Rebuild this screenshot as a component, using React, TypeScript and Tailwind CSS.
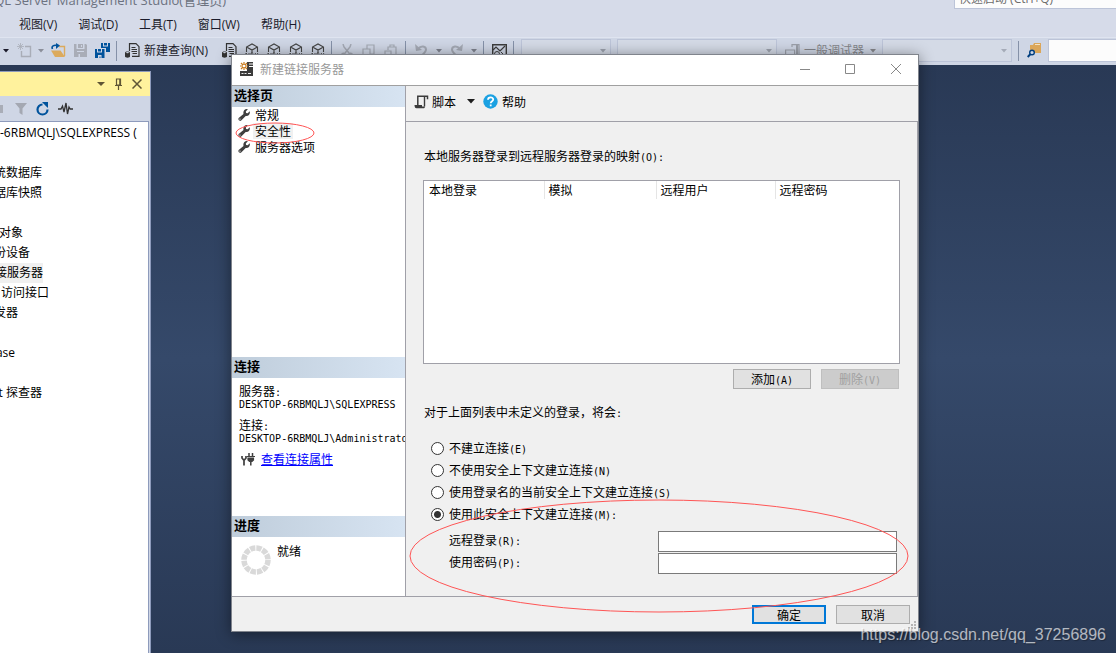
import { useState, type ReactNode } from 'react';

const UI_FONT = "font-['Open_Sans','Noto_Sans_CJK_SC',sans-serif]";
const DIALOG_FONT = "font-['Noto_Sans_CJK_SC',sans-serif]";

// Half-width latin runs inside dialog labels
function Mono({ children }: { children: ReactNode }) {
  return <span className="font-['DejaVu_Sans_Mono',monospace] text-[10px] leading-none">{children}</span>;
}

function Caret({ className = '' }: { className?: string }) {
  return (
    <svg width="6" height="4" viewBox="0 0 6 4" className={`shrink-0 ${className}`}>
      <path d="M0 0h6L3 3.5z" fill="currentColor" />
    </svg>
  );
}

function Separator({ className = '' }: { className?: string }) {
  return <span className={`h-5 w-px shrink-0 bg-[#8591a8] ${className}`} />;
}

function NewProjectIcon() {
  return (
    <svg width="15" height="15" viewBox="0 0 15 15" fill="none" stroke="#a9adb7">
      <path d="M3.5 0v7M0 3.5h7M1 1l5 5M6 1L1 6" strokeWidth=".8" />
      <path d="M8 3.5h5.5v10h-9V8" strokeWidth="1.4" />
    </svg>
  );
}

function OpenIcon() {
  return (
    <svg width="15" height="15" viewBox="0 0 15 15" fill="none">
      <path d="M8 3.5h5.5V13" stroke="#dcaa5c" strokeWidth="1.4" />
      <path d="M0 7.5h9.5L14 14H4z" fill="#dcaa5c" />
      <path d="M1.5 6C0 3 3 1.8 6 2.5" stroke="#00539c" strokeWidth="1.6" />
      <path d="M5 0l4 2.5L5 6z" fill="#00539c" />
    </svg>
  );
}

function SaveIcon() {
  return (
    <svg width="13" height="13" viewBox="0 0 13 13">
      <path d="M0 0h2.5v5h8V0H12l1 1v12H0z" fill="#a9adb7" />
      <path d="M4 0h5v4H4z" fill="#a9adb7" />
      <path d="M7 1h1v2H7zM4.500 10h1.500v3H4.500z" fill="#cfd6e5" />
      <path d="M3 7.500h7" stroke="#cfd6e5" />
    </svg>
  );
}

function SaveAllIcon() {
  return (
    <svg width="15" height="15" viewBox="0 0 15 15" fill="#00539c">
      <path d="M6 0h2v3.500h5V0h2v9h-4V5H6z" />
      <path d="M9 0h3v2.500H9z" />
      <path d="M0 6h2v3.500h5V6h2.500v9H0z" />
      <path d="M3 6h3v2.500H3z" />
      <path d="M3 12h3.500v3H5.500v-1.500H4.500V15H3z" fill="#cfd6e5" />
    </svg>
  );
}

function QueryIcon() {
  return (
    <svg width="15" height="15" viewBox="0 0 15 15" fill="none" stroke="#333">
      <path d="M4.500 8V.7H11l3 3v9.600H7" strokeWidth="1.200" />
      <path d="M6.500 4.500h4M6.500 6.500h5.500M6.500 8.500h5.500M7.500 10.500h4.500" />
      <path d="M0 9.500c0-1.500 5-1.500 5 0v4c0 1.500-5 1.500-5 0z" fill="#333" stroke="none" />
      <ellipse cx="2.500" cy="9.600" rx="1.500" ry=".6" fill="#cfd6e5" stroke="none" />
    </svg>
  );
}

function CubeIcon() {
  return (
    <svg width="14" height="15" viewBox="0 0 14 15" fill="none" stroke="#444">
      <path d="M1.500 9V4L7 1l5.500 3v5M1.500 4L7 7l5.500-3M7 7v3" strokeWidth="1.100" />
      <path d="M1 14V10l3 4v-4M6 10v4h1c2 0 2-4 0-4zM10 10l3 4M13 10l-3 4" strokeWidth=".9" />
    </svg>
  );
}

function CutIcon() {
  return (
    <svg width="12" height="14" viewBox="0 0 12 14" fill="none" stroke="#a4a9b4" strokeWidth="1.500">
      <path d="M2 0l1 3 5 6M10 0L9 3 4 9" />
      <circle cx="2.500" cy="11" r="1.800" />
      <circle cx="9.500" cy="11" r="1.800" />
    </svg>
  );
}

function CopyIcon() {
  return (
    <svg width="13" height="14" viewBox="0 0 13 14" fill="none" stroke="#a4a9b4" strokeWidth="1.200">
      <path d="M5 5V1h7v9H8M1 5h7v8H1z" />
    </svg>
  );
}

function PasteIcon() {
  return (
    <svg width="13" height="14" viewBox="0 0 13 14" fill="none" stroke="#a4a9b4" strokeWidth="1.200">
      <path d="M4 6V3h8v9H8M6 3V1h4v2M1 7h6v6H1z" />
    </svg>
  );
}

function UndoIcon({ flip = false }: { flip?: boolean }) {
  return (
    <svg width="13" height="13" viewBox="0 0 13 13" className={flip ? '-scale-x-100' : ''}>
      <path d="M3 5c3-4 8-3 8 .5 0 2.500-2 4-5 6.500" fill="none" stroke="#a4a9b4" strokeWidth="2" />
      <path d="M0 0l1 7 6-1z" fill="#a4a9b4" />
    </svg>
  );
}

function MonitorIcon() {
  return (
    <svg width="15" height="14" viewBox="0 0 15 14" fill="none" stroke="#3c3c3c">
      <path d="M.7.7h13.600v12.600H.7z" strokeWidth="1.400" />
      <path d="M1 6l3-3 4 4 5-5" strokeWidth="1.200" />
      <circle cx="5" cy="10" r="2.500" />
      <path d="M9 8l4 4" />
    </svg>
  );
}

function DebuggerIcon() {
  return (
    <svg width="15" height="14" viewBox="0 0 15 14" fill="none" stroke="#9b9fa9" strokeWidth="1.200">
      <path d="M.6 6h9v6h-9zM7 3V.6h7V12h-3" />
      <path d="M12 1v11" strokeWidth="2" />
    </svg>
  );
}

function FolderSearchIcon() {
  return (
    <svg width="15" height="15" viewBox="0 0 15 15" fill="none">
      <path d="M3 2h3l1-2h7v10H3z" fill="#dba659" />
      <path d="M8 1.500h5" stroke="#f5e3c3" />
      <circle cx="5" cy="9.500" r="2.300" fill="#cfd6e5" stroke="#003f80" strokeWidth="1.400" />
      <path d="M3.500 11L.7 14" stroke="#003f80" strokeWidth="2" />
    </svg>
  );
}

function WrenchIcon() {
  return (
    <svg width="12" height="12" viewBox="0 0 12 12">
      <path
        d="M9.800.2L7.800 2.500l.3 1.500 1.600.3 2-2c.8 2.700-1.200 5.200-4 4.600l-4.500 4.600c-1.600 1.200-3.600-.7-2.500-2.400l4.800-4.200C4.700 2 7.200-.6 9.800.2z"
        fill="#3f3f3f"
      />
      <circle cx="2" cy="10.100" r=".6" fill="#fff" />
    </svg>
  );
}

function ServerIcon() {
  return (
    <svg width="14" height="14" viewBox="0 0 14 14">
      <path d="M7 0h6v10H7z" fill="#3b3b3b" />
      <path d="M9 2h4M9 4.500h4" stroke="#fff" />
      <path d="M0 9h13v5H0z" fill="#3b3b3b" />
      <path d="M1.500 11.500h2M4.500 11.500h2M8 11.500h3" stroke="#eee" />
      <path d="M4 0v8M0 4h8M1 1l6 6M7 1L1 7" stroke="#c87a1c" strokeWidth="1.200" />
      <circle cx="4" cy="4" r="1.300" fill="#fff" />
    </svg>
  );
}

function ScriptIcon() {
  return (
    <svg width="15" height="14" viewBox="0 0 15 14" fill="none" stroke="#3b3b3b">
      <path d="M3.800 10V1.200h9.700v3" strokeWidth="1.500" />
      <path d="M10.500 1.500V11.500" strokeWidth="1.400" />
      <path d="M.5 10H8v1.500h3c0 1-.7 1.800-1.500 1.800H2.500C1.200 13.300.5 12 .5 10z" fill="#3b3b3b" stroke="none" />
    </svg>
  );
}

function PlugIcon() {
  return (
    <svg width="14" height="13" viewBox="0 0 14 13" fill="none" stroke="#3f3f3f">
      <path d="M1 3v2l2 2.500L5 5V3M3 7v5.500" strokeWidth="1.700" />
      <path d="M8 0v4M11.500 0v4M9.800 8v4.500" strokeWidth="1.500" />
      <path d="M6 3.500h8M7 5v2l1.500 1.500h2.500L12.500 7V5z" strokeWidth="1.200" fill="#3f3f3f" />
    </svg>
  );
}

function Spinner() {
  return (
    <svg width="30" height="30" viewBox="0 0 30 30" className="shrink-0">
      <circle cx="15" cy="15" r="12" fill="none" stroke="#d9d9d9" strokeWidth="5.500" strokeDasharray="5.280 1" />
    </svg>
  );
}

const MENUS = ['视图(V)', '调试(D)', '工具(T)', '窗口(W)', '帮助(H)'];

function TopBar() {
  return (
    <header className="bg-[#d6dbe9]">
      <div className="flex h-[9px] items-end justify-between overflow-hidden">
        <div className="flex w-[226px] justify-end whitespace-nowrap text-[13px] leading-[18px] text-[#6c7280]">
          SQL Server Management Studio(管理员)
        </div>
        <div className="w-[162px] border-b border-l border-[#bcc4d8] bg-[#fcfcfc] pl-1 text-[12px] leading-[18px] text-[#6d6d6d]">
          快速启动 (Ctrl+Q)
        </div>
      </div>
      <nav className="flex h-7 items-center gap-[21px] pt-1 pl-[19px] text-[12px] text-[#1b1b2b]">
        {MENUS.map((menu) => (
          <button key={menu} type="button" className="whitespace-nowrap">
            {menu}
          </button>
        ))}
      </nav>
      <div className="flex h-7 items-center overflow-hidden border-t border-[#dfe4f0] bg-[#cfd6e5] pb-0.5 text-[12px] whitespace-nowrap text-[#1b1b2b]">
        <div className="flex w-[116px] shrink-0 items-center pl-[3px]">
          <Caret />
          <span className="ml-2"><NewProjectIcon /></span>
          <Caret className="ml-[6px] text-[#8b8f9a]" />
          <span className="ml-[7px]"><OpenIcon /></span>
          <span className="ml-2"><SaveIcon /></span>
          <span className="ml-2"><SaveAllIcon /></span>
        </div>
        <Separator />
        <div className="flex w-[214px] shrink-0 items-center pl-2">
          <button type="button" className="flex w-[97px] items-center gap-1">
            <QueryIcon />
            新建查询(N)
          </button>
          <QueryIcon />
          <span className="ml-2 flex gap-2">
            <CubeIcon />
            <CubeIcon />
            <CubeIcon />
            <CubeIcon />
          </span>
        </div>
        <Separator />
        <div className="flex w-[73px] shrink-0 items-center gap-[9px] pl-[9px]">
          <CutIcon />
          <CopyIcon />
          <PasteIcon />
        </div>
        <Separator />
        <div className="flex w-[77px] shrink-0 items-center gap-2 pl-[9px] text-[#7d828e]">
          <UndoIcon />
          <Caret />
          <UndoIcon flip />
          <Caret />
        </div>
        <Separator />
        <div className="flex w-[29px] shrink-0 items-center pl-2">
          <MonitorIcon />
        </div>
        <Separator />
        <div className="ml-[7px] flex h-[23px] w-[90px] shrink-0 items-center justify-end border border-[#bcc4d8] bg-[#d4dae6] pr-1 text-[#9ca1ad]">
          <Caret />
        </div>
        <div className="ml-[6px] flex h-[23px] w-[160px] shrink-0 items-center justify-end border border-[#bcc4d8] bg-[#d4dae6] pr-1 text-[#9ca1ad]">
          <Caret />
        </div>
        <button type="button" className="ml-2 flex w-[92px] shrink-0 items-center gap-1 text-[#85868b]">
          <DebuggerIcon />
          一般调试器
          <Caret className="ml-[2px]" />
        </button>
        <div className="ml-[5px] flex h-[23px] w-[130px] shrink-0 items-center justify-end border border-[#bcc4d8] bg-[#d4dae6] pr-1 text-[#a5abb8]">
          <Caret />
        </div>
        <Separator className="ml-[6px]" />
        <span className="ml-2 shrink-0"><FolderSearchIcon /></span>
        <input
          type="text"
          aria-label="查找"
          className="ml-[6px] h-[23px] min-w-0 flex-1 border border-r-0 border-[#bcc4d8] bg-[#fcfcfc] px-1 outline-none"
        />
      </div>
    </header>
  );
}

// Tree is scrolled sideways, so each row keeps only the tail of its label
const TREE_ROWS = [
  { label: '', width: 'w-[42px]' },
  { label: '统数据库', width: 'w-[42px]' },
  { label: '据库快照', width: 'w-[42px]' },
  { label: '', width: 'w-[42px]' },
  { label: '器对象', width: 'w-[23px]' },
  { label: '份设备', width: 'w-[30px]' },
  { label: '接服务器', width: 'w-[43px]', selected: true },
  { label: '访问接口', width: 'w-[49px]' },
  { label: '发器', width: 'w-[18px]' },
  { label: '', width: 'w-[42px]' },
  { label: 'ase', width: 'w-[15px]' },
  { label: '', width: 'w-[42px]' },
  { label: 't 探查器', width: 'w-[42px]' },
];

function ObjectExplorer() {
  return (
    <aside className="mt-[6px] flex w-[151px] shrink-0 flex-col border-t border-r border-[#8e9bbc] bg-[#cfd6e5]">
      <div className="flex h-6 items-center justify-end gap-[9px] bg-[#fff29d] pr-2 text-[#5f5535]">
        <svg width="8" height="5" viewBox="0 0 8 5">
          <path d="M0 0h8L4 4z" fill="currentColor" />
        </svg>
        <svg width="9" height="12" viewBox="0 0 9 12" fill="none" stroke="currentColor">
          <path d="M2.500 1h4v6h-4zM5.800 1v6M1 7.500h7M4.500 8v4" strokeWidth="1.200" />
        </svg>
        <svg width="10" height="10" viewBox="0 0 10 10" stroke="currentColor" strokeWidth="1.500">
          <path d="M.5.5l9 9M9.500.5l-9 9" />
        </svg>
      </div>
      <div className="flex h-[25px] items-center">
        <span className="mr-3 h-2 w-[3px] bg-[#a9adb7]" />
        <svg width="12" height="12" viewBox="0 0 12 12">
          <path d="M0 0h12L7.500 5.500V12l-3-2V5.500z" fill="#a4a8b2" />
        </svg>
        <svg width="14" height="14" viewBox="0 0 14 14" className="ml-[9px]">
          <path d="M6.500 2.500a5 5 0 1 0 5 5" fill="none" stroke="#00539c" strokeWidth="2.200" />
          <path d="M6 0h6v6L9.800 4z" fill="#00539c" />
        </svg>
        <svg width="15" height="13" viewBox="0 0 15 13" className="ml-2" fill="none" stroke="#333" strokeWidth="1.300">
          <path d="M0 7h3l1.500-3L6 10 8 1l1.500 11L11 5l1.200 2H15" />
        </svg>
      </div>
      <div className="mr-px flex-1 border-t border-r border-[#8e9bbc] bg-white pt-px text-[12px] leading-5 text-black">
        <div className="h-5 overflow-hidden whitespace-nowrap">-6RBMQLJ\SQLEXPRESS (</div>
        <ul>
          {TREE_ROWS.map((row, i) => (
            <li
              key={i}
              className={`flex h-5 justify-end overflow-hidden whitespace-nowrap ${row.width} ${row.selected ? 'bg-[#f0f0f0]' : ''}`}
            >
              {row.label}
            </li>
          ))}
        </ul>
      </div>
    </aside>
  );
}

function PaneHeader({ children }: { children: ReactNode }) {
  return (
    <h2 className="h-[21px] bg-linear-to-r from-[#bfcddb] to-[#d7e4f2] pl-[2px] text-[13px] leading-[17px] font-bold">
      {children}
    </h2>
  );
}

const PAGES = ['常规', '安全性', '服务器选项'];

function DialogSidebar() {
  return (
    <div className="flex w-[174px] shrink-0 flex-col overflow-hidden border-r border-[#a0a0a8] bg-white">
      <PaneHeader>选择页</PaneHeader>
      <ul className="min-h-[250px] flex-1">
        {PAGES.map((page) => (
          <li key={page}>
            <button type="button" className="flex h-4 items-center gap-[3px] pl-[6px] leading-4">
              <WrenchIcon />
              <span className={`px-[2px] ${page === '安全性' ? 'bg-[#f0f0f0]' : ''}`}>{page}</span>
            </button>
          </li>
        ))}
      </ul>
      <PaneHeader>连接</PaneHeader>
      <div className="h-[138px] pt-[6px] pl-[7px] whitespace-nowrap">
        <div className="leading-[14px]">服务器<Mono>:</Mono></div>
        <div className="h-5 leading-[10px]"><Mono>DESKTOP-6RBMQLJ\SQLEXPRESS</Mono></div>
        <div className="leading-[14px]">连接<Mono>:</Mono></div>
        <div className="h-[14px] leading-[10px]"><Mono>DESKTOP-6RBMQLJ\Administrator</Mono></div>
        <div className="mt-1 flex items-center gap-[6px] pl-[2px] leading-[18px]">
          <PlugIcon />
          <a href="#" className="text-[#0000ff] underline">查看连接属性</a>
        </div>
      </div>
      <PaneHeader>进度</PaneHeader>
      <div className="flex h-[59px] gap-[6px] pt-2 pl-[9px] leading-[12px]">
        <Spinner />
        就绪
      </div>
    </div>
  );
}

const OPTIONS = [
  { text: '不建立连接', key: '(E)' },
  { text: '不使用安全上下文建立连接', key: '(N)' },
  { text: '使用登录名的当前安全上下文建立连接', key: '(S)' },
  { text: '使用此安全上下文建立连接', key: '(M):' },
];

function SecurityPage() {
  const [option, setOption] = useState(3);

  return (
    <div className="min-w-0 flex-1">
      <div className="flex h-9 items-center border-b border-[#a0a0a8] pb-1 pl-2">
        <button type="button" className="flex items-center gap-[3px]">
          <ScriptIcon />
          脚本
          <svg width="8" height="5" viewBox="0 0 8 5" className="ml-2">
            <path d="M0 0h8L4 4.500z" fill="#1e1e1e" />
          </svg>
        </button>
        <button type="button" className="ml-2 flex items-center gap-1">
          <svg width="15" height="15" viewBox="0 0 15 15">
            <circle cx="7.500" cy="7.500" r="7.200" fill="#1ba1e2" />
            <path d="M5 5.800c0-3.300 5.200-3.100 5.200-.3C10.200 7.300 7.700 7 7.700 9.200" fill="none" stroke="#fff" strokeWidth="1.800" />
            <path d="M6.800 10.500h1.800v1.800H6.800z" fill="#fff" />
          </svg>
          帮助
        </button>
      </div>
      <div className="border-r border-[#a0a0a8] pt-6 pr-[17px] pb-[21px] pl-[17px]">
        <p className="pl-px leading-5">本地服务器登录到远程服务器登录的映射<Mono>(O):</Mono></p>
        <div className="mt-[14px] h-[184px] border border-[#a0a0a8] bg-white">
          <table className="w-full table-fixed text-left">
            <thead>
              <tr className="h-[18px] leading-[18px]">
                <th className="w-[120px] border-r border-[#e5e5e5] pl-[5px] font-normal">本地登录</th>
                <th className="w-[112px] border-r border-[#e5e5e5] pl-1 font-normal">模拟</th>
                <th className="w-[119px] border-r border-[#e5e5e5] pl-1 font-normal">远程用户</th>
                <th className="pl-1 font-normal">远程密码</th>
              </tr>
            </thead>
            <tbody />
          </table>
        </div>
        <div className="mt-[5px] flex justify-end gap-[10px] pr-px">
          <button type="button" className="h-5 w-[78px] border border-[#adadad] bg-[#e1e1e1] leading-[18px]">
            添加<Mono>(A)</Mono>
          </button>
          <button type="button" disabled className="h-5 w-[78px] border border-[#bfbfbf] bg-[#cccccc] leading-[18px] text-[#a0a0a0]">
            删除<Mono>(V)</Mono>
          </button>
        </div>
        <fieldset className="mt-[13px]">
          <legend className="pl-px leading-5">对于上面列表中未定义的登录，将会<Mono>:</Mono></legend>
          <div className="mt-[15px] pl-2">
            {OPTIONS.map((item, i) => (
              <label key={item.key} className="flex h-[22px] items-center gap-[5px]">
                <input
                  type="radio"
                  name="security"
                  checked={option === i}
                  onChange={() => setOption(i)}
                  className="size-[13px] appearance-none rounded-full border border-[#333] bg-white checked:bg-[radial-gradient(circle,#333_3px,#fff_4px)]"
                />
                <span>{item.text}<Mono>{item.key}</Mono></span>
              </label>
            ))}
          </div>
        </fieldset>
        <div className="mt-[6px] pr-[3px] pl-[26px]">
          <div className="flex h-[22px] items-start justify-between">
            <label htmlFor="remote-login" className="leading-[18px]">远程登录<Mono>(R):</Mono></label>
            <input id="remote-login" type="text" className="h-[21px] w-[239px] border border-[#7a7a7a] bg-white px-1 outline-none" />
          </div>
          <div className="flex h-[22px] items-start justify-between">
            <label htmlFor="remote-password" className="leading-[18px]">使用密码<Mono>(P):</Mono></label>
            <input id="remote-password" type="password" className="h-[21px] w-[239px] border border-[#7a7a7a] bg-white px-1 outline-none" />
          </div>
        </div>
      </div>
    </div>
  );
}

function LinkedServerDialog() {
  return (
    <section
      role="dialog"
      aria-label="新建链接服务器"
      className={`absolute top-[54px] right-[197px] left-[231px] border border-[#80848c] bg-[#f0f0f0] text-[12px] text-black shadow-[0_2px_14px_rgba(0,0,0,0.45)] ${DIALOG_FONT}`}
    >
      <div className="flex h-[31px] items-center border-b border-[#a0a0a0] bg-white pr-4 pb-0.5 pl-2">
        <ServerIcon />
        <h1 className="ml-[6px] flex-1 text-[#999]">新建链接服务器</h1>
        <div className="flex items-center gap-[34px] text-[#888]">
          <button type="button" aria-label="最小化">
            <svg width="12" height="12" viewBox="0 0 12 12"><path d="M1 6.500h10" stroke="currentColor" /></svg>
          </button>
          <button type="button" aria-label="最大化">
            <svg width="11" height="11" viewBox="0 0 11 11"><path d="M.5.5h9v9h-9z" fill="none" stroke="currentColor" /></svg>
          </button>
          <button type="button" aria-label="关闭">
            <svg width="12" height="12" viewBox="0 0 12 12"><path d="M1 1l10 10M11 1L1 11" stroke="currentColor" /></svg>
          </button>
        </div>
      </div>
      <div className="flex border-b border-[#a0a0a8]">
        <DialogSidebar />
        <SecurityPage />
      </div>
      <div className="flex h-[34px] items-start justify-end gap-[10px] pt-2 pr-2">
        <button type="button" className="h-[19px] w-[74px] border-2 border-[#0078d7] bg-[#e1e1e1] leading-[15px]">确定</button>
        <button type="button" className="h-[19px] w-[74px] border border-[#adadad] bg-[#e1e1e1] leading-[17px]">取消</button>
      </div>
      <svg width="10" height="10" viewBox="0 0 10 10" className="absolute right-0 bottom-0" fill="#b4b4b4">
        <path d="M6 0h2v2H6zM6 3h2v2H6zM3 3h2v2H3zM6 6h2v2H6zM3 6h2v2H3zM0 6h2v2H0z" />
      </svg>
      {/* Hand-drawn markers around the page entry and the credentials block */}
      <svg viewBox="0 0 686 576" width="686" height="576" className="pointer-events-none absolute top-0 left-0" fill="none" stroke="#f55">
        <ellipse cx="43" cy="78" rx="39" ry="10" />
        <ellipse cx="427" cy="501" rx="249" ry="56" />
      </svg>
    </section>
  );
}

export default function App() {
  return (
    <div className={`relative flex min-h-screen flex-col overflow-hidden bg-[#293955] ${UI_FONT}`}>
      <TopBar />
      <main className="flex flex-1 bg-linear-to-b from-[#293955] via-[#35496a] to-[#293955]">
        <ObjectExplorer />
      </main>
      <LinkedServerDialog />
      <div className="absolute right-[10px] bottom-1.5 font-['Liberation_Sans',sans-serif] text-[16px] leading-6 text-white/65 [text-shadow:1px_1px_1px_rgba(0,0,0,0.3)]">
        https://blog.csdn.net/qq_37256896
      </div>
    </div>
  );
}
